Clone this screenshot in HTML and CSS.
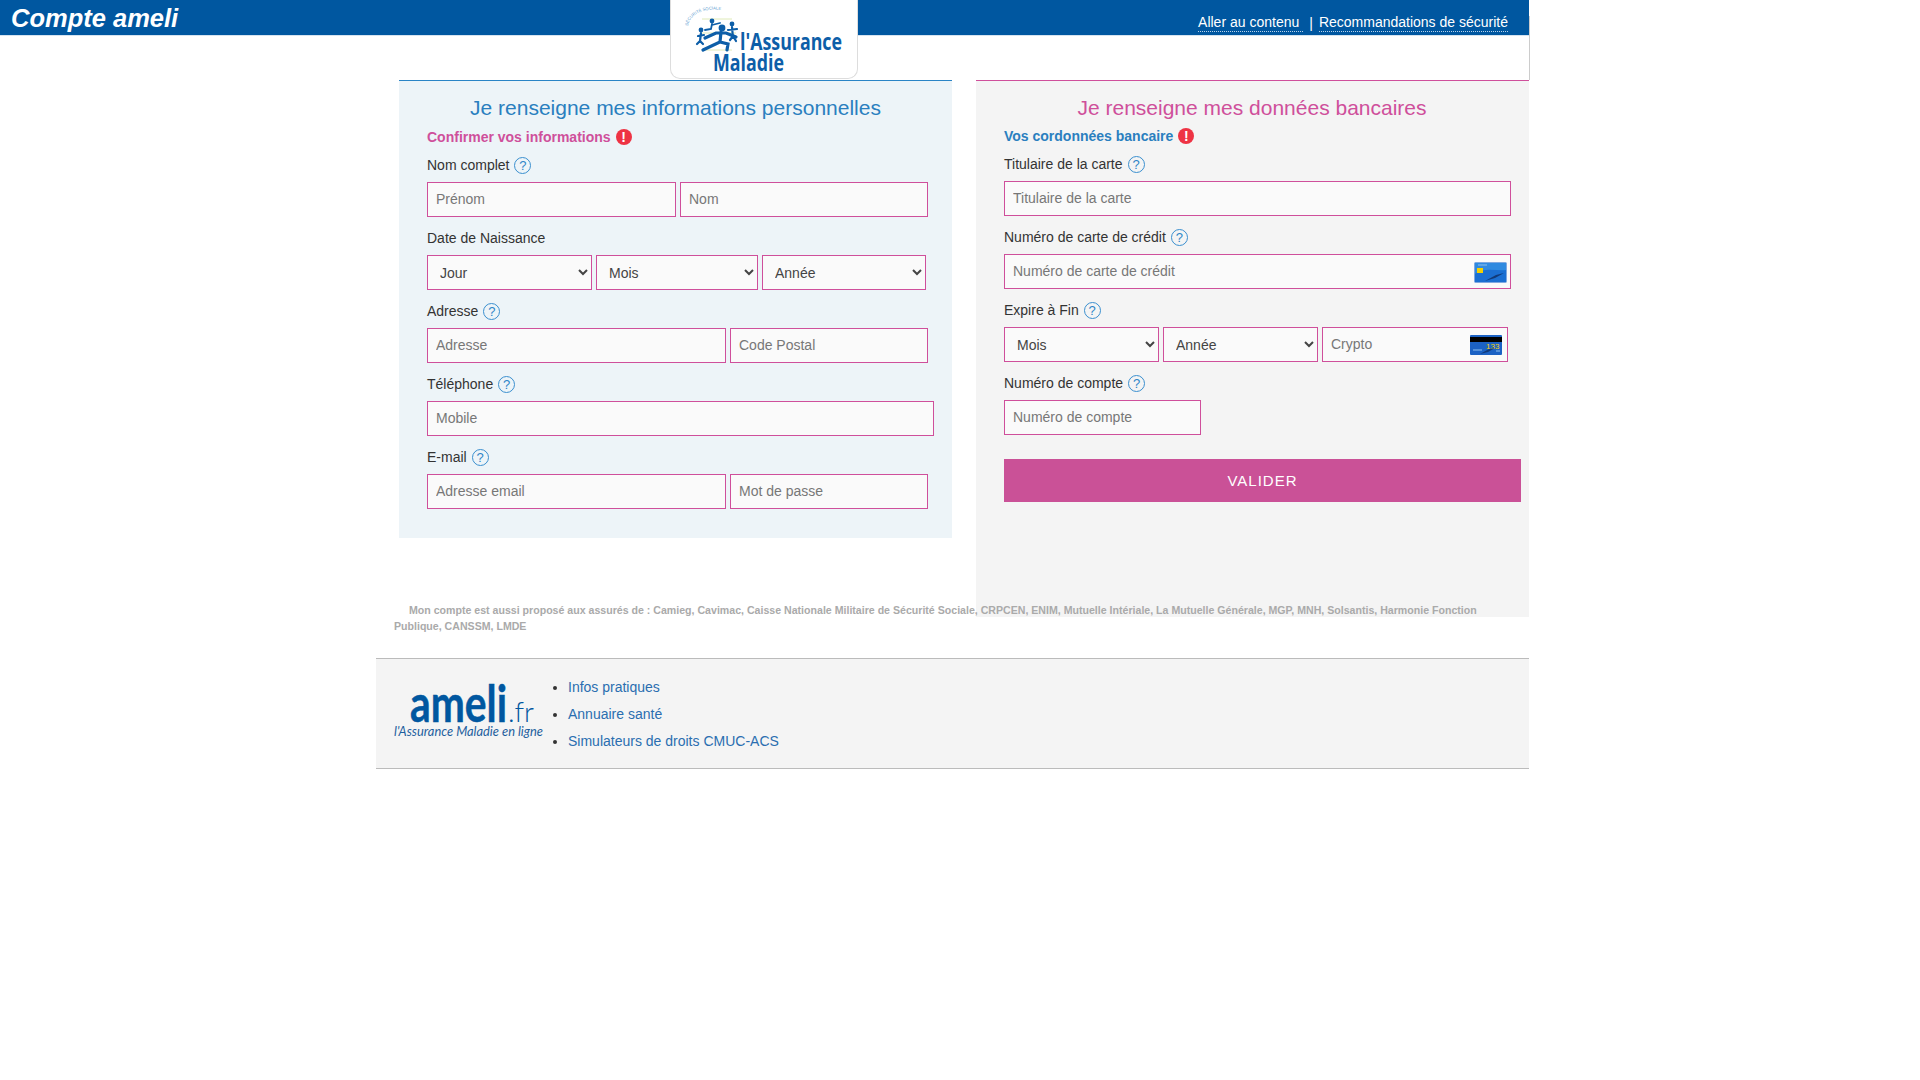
FILE: index.html
```html
<!DOCTYPE html>
<html lang="fr">
<head>
  <meta charset="UTF-8" />
  <title>Compte ameli</title>
  <link rel="stylesheet" href="styles.css">
</head>
<body>

  <div class="page">
    <header class="top-bar">
      <span class="brand">Compte ameli</span>
      <nav class="top-links">
        <a href="#" class="first-link">Aller au contenu</a>
        <span class="sep">|</span>
        <a href="#">Recommandations de sécurité</a>
      </nav>
    </header>

    <!-- logo qui deborde sur le bandeau -->
    <div class="logo-box">
      <svg width="188" height="78" viewBox="0 0 188 78">
        <defs>
          <path id="arc" d="M18 26 C19 15 34 6 56 11" />
        </defs>
        <g stroke="#dfeab8" stroke-width="1">
          <path d="M32 19H62M30 33H66M32 50H62" />
        </g>
        <text class="logo-arc"><textPath href="#arc">SÉCURITÉ SOCIALE</textPath></text>
        <g fill="#0d5ea8">
          <circle cx="52" cy="28" r="3.4" />
          <circle cx="31" cy="30" r="2.4" />
          <circle cx="42" cy="21" r="2.4" />
          <circle cx="62" cy="24" r="2.4" />
        </g>
        <g fill="none" stroke="#0d5ea8" stroke-linecap="round">
          <path stroke-width="3.2" d="M35 38L46 33L56 33L66 37M51 32L50 42L33 50M50 42L58 44L57 50" />
          <path stroke-width="2.2" d="M31 33L30 41M28 36L34 35M30 41L27 44M30 41L33 44" />
          <path stroke-width="1.8" d="M42 24L41 29L35 30M42 25L50 23" />
          <path stroke-width="2.2" d="M62 27L63 38M58 30L67 29M63 36L60 40M63 36L66 41" />
        </g>
        <text class="logo-name" x="70" y="50" textLength="102" lengthAdjust="spacingAndGlyphs">l'Assurance</text>
        <text class="logo-name" x="43" y="71" textLength="71" lengthAdjust="spacingAndGlyphs">Maladie</text>
      </svg>
    </div>

    <main class="columns">
      <section class="panel panel-perso">
        <h2 class="panel-title">Je renseigne mes informations personnelles</h2>
        <h3 class="panel-sub">Confirmer vos informations <span class="alert">!</span></h3>

        <div class="field">
          <label>Nom complet <span class="help">?</span></label>
          <div class="row row-name">
            <input type="text" placeholder="Prénom">
            <input type="text" placeholder="Nom">
          </div>
        </div>

        <div class="field">
          <label>Date de Naissance</label>
          <div class="row row-date">
            <select><option>Jour</option></select>
            <select><option>Mois</option></select>
            <select><option>Année</option></select>
          </div>
        </div>

        <div class="field">
          <label>Adresse <span class="help">?</span></label>
          <div class="row row-addr">
            <input type="text" placeholder="Adresse">
            <input type="text" placeholder="Code Postal">
          </div>
        </div>

        <div class="field">
          <label>Téléphone <span class="help">?</span></label>
          <div class="row row-tel">
            <input type="text" placeholder="Mobile">
          </div>
        </div>

        <div class="field">
          <label>E-mail <span class="help">?</span></label>
          <div class="row row-addr">
            <input type="text" placeholder="Adresse email">
            <input type="text" placeholder="Mot de passe">
          </div>
        </div>
      </section>

      <section class="panel panel-bank">
        <h2 class="panel-title">Je renseigne mes données bancaires</h2>
        <h3 class="panel-sub">Vos cordonnées bancaire <span class="alert">!</span></h3>

        <div class="field">
          <label>Titulaire de la carte <span class="help">?</span></label>
          <div class="row row-full">
            <input type="text" placeholder="Titulaire de la carte">
          </div>
        </div>

        <div class="field">
          <label>Numéro de carte de crédit <span class="help">?</span></label>
          <div class="row row-full">
            <div class="with-card">
              <input type="text" placeholder="Numéro de carte de crédit">
              <svg class="card card-front" width="33" height="21" viewBox="0 0 33 21">
                <rect x="0.5" y="0.5" width="32" height="20" rx="1" fill="#1b6fd2" stroke="#7fa8e0" />
                <path d="M1 1H32V8C22 9 10 5 1 12Z" fill="#2f8ae0" />
                <rect x="3" y="6" width="6" height="5" fill="#f5d000" />
                <path d="M11 19L22 13L30 11L21 16Z" fill="#123a78" />
                <path d="M4 3H13" stroke="#8fc0ee" stroke-width="1" />
              </svg>
            </div>
          </div>
        </div>

        <div class="field">
          <label>Expire à Fin <span class="help">?</span></label>
          <div class="row row-exp">
            <select><option>Mois</option></select>
            <select><option>Année</option></select>
            <div class="with-card">
              <input type="text" placeholder="Crypto">
              <svg class="card card-back" width="32" height="20" viewBox="0 0 32 20">
                <rect width="32" height="20" rx="1" fill="#1c62c4" />
                <rect y="2" width="32" height="5" fill="#000" />
                <text class="card-code" x="16" y="14">133</text>
                <path d="M10 19L19 14L25 13L18 17Z" fill="#123a78" />
                <path d="M3 15H12M26 16H30" stroke="#8fc0ee" stroke-width="1" />
              </svg>
            </div>
          </div>
        </div>

        <div class="field">
          <label>Numéro de compte <span class="help">?</span></label>
          <div class="row row-compte">
            <input type="text" placeholder="Numéro de compte">
          </div>
        </div>

        <button class="submit-btn" type="button">VALIDER</button>
      </section>
    </main>

    <p class="note">Mon compte est aussi proposé aux assurés de : Camieg, Cavimac, Caisse Nationale Militaire de Sécurité Sociale, CRPCEN, ENIM, Mutuelle Intériale, La Mutuelle Générale, MGP, MNH, Solsantis, Harmonie Fonction Publique, CANSSM, LMDE</p>

    <footer class="site-footer">
      <svg class="ameli-logo" width="152" height="64" viewBox="0 0 152 64">
        <text class="ameli-word" x="16" y="46" textLength="97" lengthAdjust="spacingAndGlyphs">ameli</text>
        <text class="ameli-fr" x="114" y="46" textLength="26" lengthAdjust="spacingAndGlyphs">.fr</text>
        <text class="ameli-tag" x="0" y="60" textLength="149" lengthAdjust="spacingAndGlyphs">l'Assurance Maladie en ligne</text>
      </svg>
      <ul class="footer-links">
        <li><a href="#">Infos pratiques</a></li>
        <li><a href="#">Annuaire santé</a></li>
        <li><a href="#">Simulateurs de droits CMUC-ACS</a></li>
      </ul>
    </footer>
  </div>

</body>
</html>
```
FILE: styles.css
```css
* {
  box-sizing: border-box;
  font-family: "Liberation Sans", Arial, sans-serif;
}

body {
  margin: 0;
  background: #fff;
  color: #333;
  font-size: 14px;
}

.page {
  position: relative;
  width: 1530px;
}

/* filet gris a droite du bandeau */
.page::after {
  content: "";
  position: absolute;
  top: 16px;
  left: 1529px;
  width: 1px;
  height: 64px;
  background: #ccc;
}

.top-bar {
  display: flex;
  justify-content: space-between;
  height: 36px;
  width: 1529px;
  padding: 0 21px 0 11px;
  background: #0057a0;
  border-bottom: 1px solid #d5e3f0;
}

.brand {
  color: #fff;
  font-size: 25.5px;
  font-weight: bold;
  font-style: italic;
  line-height: 37px;
}

.top-links {
  display: flex;
  align-items: center;
  gap: 6px;
  padding-top: 11px;
  color: #fff;
  font-size: 14px;
}

.top-links a {
  color: #fff;
  text-decoration: none;
  border-bottom: 1px dotted #b8d2ea;
  line-height: 17px;
}

.first-link {
  padding-right: 4px;
}

.logo-box {
  position: absolute;
  top: 0;
  left: 670px;
  width: 188px;
  height: 79px;
  background: #fff;
  border: 1px solid #ddd;
  border-top: 0;
  border-radius: 0 0 10px 10px;
}

.logo-box svg {
  display: block;
  margin-left: -1px;
}

.logo-arc {
  font-size: 4.2px;
  fill: #5a9bd0;
}

.logo-name {
  font-family: "Open Sans", sans-serif;
  font-weight: bold;
  font-size: 24px;
  fill: #0d5ea8;
}

.columns {
  display: grid;
  grid-template-columns: 553px 553px;
  column-gap: 24px;
  align-items: start;
  margin-top: 44px;
  margin-left: 399px;
  width: 1131px;
}

.panel {
  padding: 12px 0 0 28px;
  border-top: 1px solid;
}

.panel-perso {
  height: 458px;
  background: #edf4f8;
  border-top-color: #2a84c6;
}

.panel-bank {
  height: 537px;
  background: #f4f4f4;
  border-top-color: #cf4f9b;
}

.panel-title {
  margin: 0;
  font-size: 21px;
  font-weight: normal;
  line-height: 30px;
  text-align: center;
}

.panel-perso .panel-title {
  padding-right: 28px;
  color: #2a7fbf;
}

.panel-bank .panel-title {
  padding-right: 29px;
  color: #cf4f9b;
}

.panel-sub {
  display: flex;
  align-items: center;
  gap: 5px;
  height: 14px;
  margin: 7px 0 0;
  font-size: 14px;
  line-height: 14px;
}

.panel-bank .panel-sub {
  margin-top: 6px;
}

.panel-perso .panel-sub {
  color: #cf4f9b;
}

.panel-bank .panel-sub {
  color: #2a7fbf;
}

.alert {
  display: inline-block;
  width: 16px;
  height: 16px;
  border-radius: 50%;
  background: #ee3344;
  color: #fff;
  font-size: 14px;
  font-weight: bold;
  line-height: 16px;
  text-align: center;
}

.field label {
  display: flex;
  align-items: center;
  gap: 5px;
  height: 38px;
  padding-top: 4px;
  color: #333;
  font-size: 14px;
}

.help {
  display: inline-block;
  width: 17px;
  height: 17px;
  border: 1px solid #3a8fcf;
  border-radius: 50%;
  color: #2f86c8;
  font-size: 13px;
  line-height: 15px;
  text-align: center;
}

.row {
  display: grid;
  column-gap: 4px;
  height: 35px;
}

.row-name { grid-template-columns: 249px 248px; }
.row-date { grid-template-columns: 165px 162px 164px; }
.row-addr { grid-template-columns: 299px 198px; }
.row-tel { grid-template-columns: 507px; }
.row-full { grid-template-columns: 507px; }
.row-exp { grid-template-columns: 155px 155px 186px; }
.row-compte { grid-template-columns: 197px; }

input, select {
  width: 100%;
  height: 35px;
  padding: 0 8px;
  background: #fafafa;
  border: 1px solid #cf4f9b;
  border-radius: 0;
  color: #444;
  font-size: 14px;
  outline: none;
}

input {
  padding-bottom: 2px;
}

input::placeholder {
  color: #777;
}

.with-card {
  position: relative;
}

.card {
  position: absolute;
  display: block;
}

.card-front {
  top: 8px;
  right: 4px;
}

.card-back {
  top: 8px;
  right: 6px;
}

.card-code {
  font-size: 8px;
  fill: #f5d000;
}

.submit-btn {
  display: block;
  width: 517px;
  height: 43px;
  margin-top: 24px;
  border: none;
  background: #ca5197;
  color: #fff;
  font-size: 15px;
  letter-spacing: 1px;
}

.note {
  position: relative;
  width: 1100px;
  margin: -15px 0 0 394px;
  color: #aaa;
  font-size: 10.6px;
  font-weight: bold;
  line-height: 16px;
  text-indent: 15px;
}

.site-footer {
  display: flex;
  align-items: flex-start;
  width: 1153px;
  height: 111px;
  margin: 24px 0 0 376px;
  padding: 0 0 0 18px;
  background: #f4f4f4;
  border-top: 1px solid #bbb;
  border-bottom: 1px solid #bbb;
}

.ameli-logo {
  display: block;
  margin: 17px 0 0 0;
}

.ameli-word {
  font-family: Lato, sans-serif;
  font-weight: bold;
  font-size: 52px;
  fill: #0057a0;
  stroke: #0057a0;
  stroke-width: 0.5px;
}

.ameli-fr {
  font-family: Lato, sans-serif;
  font-weight: 300;
  font-size: 28px;
  fill: #0057a0;
}

.ameli-tag {
  font-family: Lato, sans-serif;
  font-style: italic;
  font-size: 14px;
  fill: #1e5f9e;
}

.footer-links {
  margin: 15px 0 0;
  padding: 0 0 0 22px;
  list-style: disc;
  color: #333;
  line-height: 27px;
}

.footer-links a {
  color: #2a6eb0;
  text-decoration: none;
}
```
